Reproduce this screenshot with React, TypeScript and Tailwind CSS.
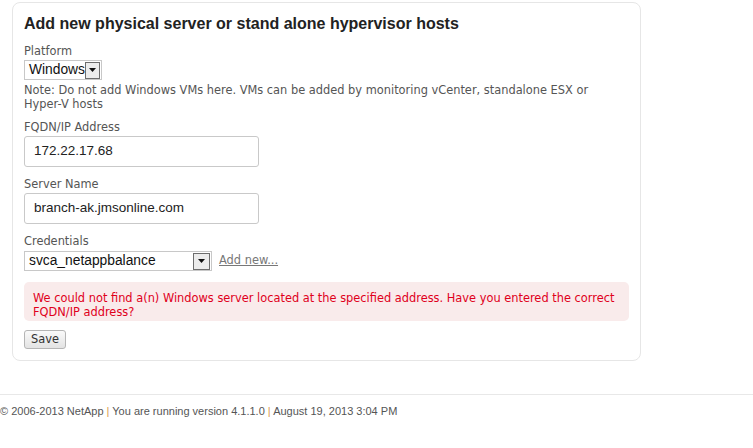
import React from "react";

const labelCls = "text-[11.4px] leading-[14px] text-[#555]";
const verdana = { fontFamily: '"DejaVu Sans", Verdana, sans-serif' };
const arial = { fontFamily: '"Liberation Sans", Arial, sans-serif' };

const Arrow: React.FC = () => (
  <div className="flex h-[17px] w-[17px] items-center justify-center border border-[#6d6d6d] bg-[#ececec]">
    <svg width="7" height="4" viewBox="0 0 7 4">
      <path d="M0 0h7L3.5 4z" fill="#111" />
    </svg>
  </div>
);

const FakeSelect: React.FC<{ value: string; width: string }> = ({ value, width }) => (
  <div
    className={`flex h-[20px] ${width} items-center justify-between border border-[#c8c8c8] bg-white pl-[4px] pr-[1px]`}
  >
    <span className="text-[13.8px] leading-none text-[#111]" style={arial}>
      {value}
    </span>
    <Arrow />
  </div>
);

const TextInput: React.FC<{ value: string }> = ({ value }) => (
  <div
    className="flex h-[31px] w-[235px] items-center rounded-[3px] border border-[#c9c9c9] bg-white px-[9px] text-[13.5px] text-[#222]"
    style={arial}
  >
    {value}
  </div>
);

export default function App() {
  return (
    <div className="min-h-[448px] w-[753px] bg-white" style={verdana}>
      <div className="pl-[12px] pt-[2px]">
        <div className="w-[629px] rounded-[8px] border border-[#e6e6e6] px-[11px] pb-[11px] pt-[11px]">
          <h1 className="text-[16px] font-bold leading-[20px] text-[#222]" style={arial}>
            Add new physical server or stand alone hypervisor hosts
          </h1>

          <div className={`${labelCls} mt-[10px]`}>Platform</div>
          <div className="mt-[2px]">
            <FakeSelect value="Windows" width="w-[78px]" />
          </div>
          <div className={`${labelCls} mt-[3px]`}>
            Note: Do not add Windows VMs here. VMs can be added by monitoring vCenter, standalone ESX or
            <br />
            Hyper-V hosts
          </div>

          <div className={`${labelCls} mt-[9px]`}>FQDN/IP Address</div>
          <div className="mt-[2px]">
            <TextInput value="172.22.17.68" />
          </div>

          <div className={`${labelCls} mt-[10px]`}>Server Name</div>
          <div className="mt-[2px]">
            <TextInput value="branch-ak.jmsonline.com" />
          </div>

          <div className={`${labelCls} mt-[10px]`}>Credentials</div>
          <div className="mt-[3px] flex items-center gap-[7px]">
            <FakeSelect value="svca_netappbalance" width="w-[188px]" />
            <a href="#" className="text-[11.4px] text-[#777] underline">
              Add new...
            </a>
          </div>

          <div className="mt-[11px] rounded-[5px] bg-[#f9ebeb] pb-[2px] pl-[9px] pr-[8px] pt-[9px] text-[11.4px] leading-[14px] text-[#e0001b]">
            We could not find a(n) Windows server located at the specified address. Have you entered the correct
            <br />
            FQDN/IP address?
          </div>

          <button className="mt-[9px] flex h-[19px] items-center rounded-[3px] border border-[#b5b5b5] bg-gradient-to-b from-[#fafafa] to-[#e3e3e3] px-[6px] text-[11.4px] text-[#333]">
            Save
          </button>
        </div>
      </div>

      <div className="mt-[33px] border-t border-[#e8e8e8] pt-[8px]">
        <div className="text-[11px] leading-[16px] text-[#555]" style={arial}>
          © 2006-2013 NetApp <span className="text-[#d99a4e]">|</span> You are running version 4.1.1.0{" "}
          <span className="text-[#d99a4e]">|</span> August 19, 2013 3:04 PM
        </div>
      </div>
    </div>
  );
}
